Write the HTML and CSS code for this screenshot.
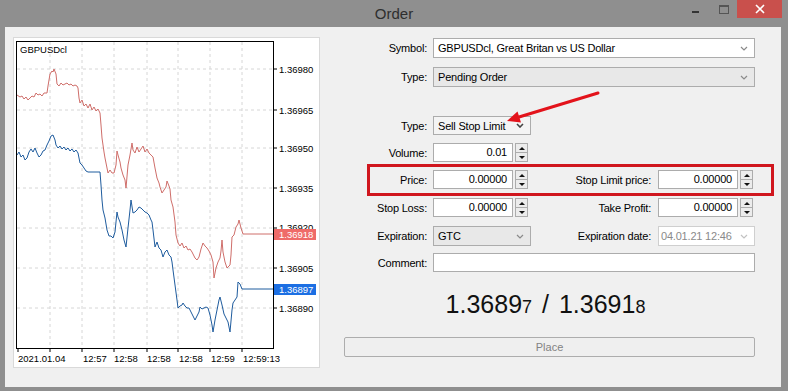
FILE: index.html
```html
<!DOCTYPE html>
<html lang="en">

<head>
    <meta charset="UTF-8">
    <meta name="viewport" content="width=device-width, initial-scale=1.0">
    <title>Order</title>
    <link rel="stylesheet" href="styles.css">
</head>

<body>
    <div class="titlebar">
        <span></span>
        <span class="title">Order</span>
        <div class="controls">
            <span class="ctl"><span class="min-bar"></span></span>
            <span class="ctl"><span class="max-box"></span></span>
            <span class="ctl close">
                <svg width="10" height="10" viewBox="0 0 10 10"><path d="M1 1 L9 9 M9 1 L1 9" stroke="#fff" stroke-width="1.6"/></svg>
            </span>
        </div>
    </div>

    <div class="window-body">
        <!-- chart: svg uses page coordinates through its viewBox -->
        <div class="chart-panel">
            <svg class="chart" width="305" height="329" viewBox="14 38 305 329">
                <defs>
                    <clipPath id="aboveTag"><rect x="274" y="220" width="44" height="9"/></clipPath>
                </defs>
                <g class="grid">
                    <line x1="50" y1="42" x2="50" y2="348"/>
                    <line x1="82" y1="42" x2="82" y2="348"/>
                    <line x1="114" y1="42" x2="114" y2="348"/>
                    <line x1="147" y1="42" x2="147" y2="348"/>
                    <line x1="178" y1="42" x2="178" y2="348"/>
                    <line x1="210" y1="42" x2="210" y2="348"/>
                    <line x1="242" y1="42" x2="242" y2="348"/>
                    <line x1="17" y1="69" x2="273" y2="69"/>
                    <line x1="17" y1="110" x2="273" y2="110"/>
                    <line x1="17" y1="148" x2="273" y2="148"/>
                    <line x1="17" y1="188" x2="273" y2="188"/>
                    <line x1="17" y1="228" x2="273" y2="228"/>
                    <line x1="17" y1="268" x2="273" y2="268"/>
                    <line x1="17" y1="308" x2="273" y2="308"/>
                </g>
                <polyline class="ask" points="17,95 20,97 22,96 24,99 26,97 28,100 30,98 32,96 34,97 36,93 38,95 40,94 42,96 44,93 47,93 48,86 50,74 52,71 53,72 54,69 56,74 57,84 59,86 61,83 63,85 65,84 67,83 69,85 71,84 73,86 75,85 77,86 78,88 79,98 80,103 82,100 84,106 86,104 88,108 90,104 92,110 94,107 96,111 98,109 100,113 101,125 102,138 104,152 105,158 107,168 108,173 110,170 112,173 114,173 116,165 117,151 118,155 120,162 121,168 123,175 125,180 126,188 128,165 130,155 132,143 133,150 135,153 137,147 139,152 141,149 143,146 145,152 147,149 149,153 151,155 153,157 155,168 157,178 159,183 160,187 162,193 164,190 166,187 167,181 169,186 170,189 171,200 173,207 175,222 176,235 178,243 180,246 182,243 184,248 186,246 188,250 190,249 192,252 193,254 195,258 197,260 199,257 200,253 201,249 203,243 205,246 207,248 209,251 211,255 213,262 214,278 216,268 218,262 220,258 221,251 222,240 223,252 225,262 227,268 229,266 230,265 231,255 232,237 234,235 236,227 238,224 239,220 241,228 243,234 273,234"/>
                <polyline class="bid" points="17,155 19,152 21,157 23,155 25,160 27,158 29,152 31,149 33,152 35,148 37,153 39,157 41,155 43,151 45,150 47,145 49,141 51,136 53,135 55,140 56,145 58,148 60,146 62,149 64,147 66,150 68,148 70,151 72,149 74,152 76,150 78,153 80,163 82,165 84,168 86,171 88,172 100,172 101,185 102,200 103,210 105,218 107,230 109,236 111,236 113,238 115,232 117,212 118,217 120,222 122,230 124,240 126,247 128,228 130,210 131,200 133,213 135,212 137,210 139,207 141,208 143,210 145,212 147,213 149,215 151,220 152,222 153,230 155,247 157,242 159,248 161,250 163,257 165,252 167,250 169,255 171,257 172,262 173,270 175,285 177,300 178,308 180,306 182,305 183,303 185,306 187,308 189,308 191,312 193,316 195,320 197,316 199,312 200,307 202,309 204,308 206,307 208,308 210,315 212,325 213,332 215,320 217,310 219,300 220,297 222,305 224,314 226,318 228,322 230,332 232,310 233,303 235,300 237,297 238,282 240,284 242,289 273,289"/>
                <rect class="frame" x="16.5" y="41.5" width="257" height="307"/>
                <g class="ticks">
                    <line x1="273" y1="69" x2="277" y2="69"/>
                    <line x1="273" y1="110" x2="277" y2="110"/>
                    <line x1="273" y1="148" x2="277" y2="148"/>
                    <line x1="273" y1="188" x2="277" y2="188"/>
                    <line x1="273" y1="228" x2="277" y2="228"/>
                    <line x1="273" y1="268" x2="277" y2="268"/>
                    <line x1="273" y1="308" x2="277" y2="308"/>
                    <line x1="18" y1="348" x2="18" y2="352"/>
                    <line x1="50" y1="348" x2="50" y2="352"/>
                    <line x1="82" y1="348" x2="82" y2="352"/>
                    <line x1="114" y1="348" x2="114" y2="352"/>
                    <line x1="147" y1="348" x2="147" y2="352"/>
                    <line x1="178" y1="348" x2="178" y2="352"/>
                    <line x1="210" y1="348" x2="210" y2="352"/>
                    <line x1="242" y1="348" x2="242" y2="352"/>
                </g>
                <g class="labels">
                    <text x="20" y="53">GBPUSDcl</text>
                    <text x="279" y="73">1.36980</text>
                    <text x="279" y="114">1.36965</text>
                    <text x="279" y="152">1.36950</text>
                    <text x="279" y="192">1.36935</text>
                    <text x="279" y="231" clip-path="url(#aboveTag)">1.36920</text>
                    <text x="279" y="272">1.36905</text>
                    <text x="279" y="312">1.36890</text>
                    <text x="18" y="362">2021.01.04</text>
                    <text x="83" y="362">12:57</text>
                    <text x="114" y="362">12:58</text>
                    <text x="147" y="362">12:58</text>
                    <text x="179" y="362">12:58</text>
                    <text x="211" y="362">12:59</text>
                    <text x="243" y="362">12:59:13</text>
                </g>
                <rect class="ask-tag" x="274" y="229" width="42" height="11"/>
                <text class="tag-text" x="279" y="238">1.36918</text>
                <rect class="bid-tag" x="274" y="284" width="42" height="11"/>
                <text class="tag-text" x="279" y="293">1.36897</text>
            </svg>
        </div>

        <div class="form">
            <div class="row tall">
                <label class="lbl">Symbol:</label>
                <div class="select span-all">
                    <span>GBPUSDcl, Great Britan vs US Dollar</span>
                    <svg class="chev" viewBox="0 0 8 5"><polyline points="1,1 4,4 7,1"/></svg>
                </div>
            </div>

            <div class="row tall gap-9">
                <label class="lbl">Type:</label>
                <div class="select span-all shaded">
                    <span>Pending Order</span>
                    <svg class="chev" viewBox="0 0 8 5"><polyline points="1,1 4,4 7,1"/></svg>
                </div>
            </div>

            <div class="row gap-29">
                <label class="lbl">Type:</label>
                <div class="select short light">
                    <span>Sell Stop Limit</span>
                    <svg class="chev dark" viewBox="0 0 8 5"><polyline points="1,1 4,4 7,1"/></svg>
                </div>
            </div>

            <div class="row gap-8">
                <label class="lbl">Volume:</label>
                <div class="num">0.01</div>
                <span class="spin"><i class="up"></i><i class="down"></i></span>
            </div>

            <div class="row gap-8 marked">
                <label class="lbl">Price:</label>
                <div class="num">0.00000</div>
                <span class="spin"><i class="up"></i><i class="down"></i></span>
                <label class="lbl">Stop Limit price:</label>
                <div class="num">0.00000</div>
                <span class="spin"><i class="up"></i><i class="down"></i></span>
                <div class="highlight"></div>
            </div>

            <div class="row gap-9">
                <label class="lbl">Stop Loss:</label>
                <div class="num">0.00000</div>
                <span class="spin"><i class="up"></i><i class="down"></i></span>
                <label class="lbl">Take Profit:</label>
                <div class="num">0.00000</div>
                <span class="spin"><i class="up"></i><i class="down"></i></span>
            </div>

            <div class="row tall gap-9">
                <label class="lbl">Expiration:</label>
                <div class="select short shaded">
                    <span>GTC</span>
                    <svg class="chev" viewBox="0 0 8 5"><polyline points="1,1 4,4 7,1"/></svg>
                </div>
                <label class="lbl">Expiration date:</label>
                <div class="select date disabled">
                    <span>04.01.21 12:46</span>
                    <svg class="chev" viewBox="0 0 8 5"><polyline points="1,1 4,4 7,1"/></svg>
                </div>
            </div>

            <div class="row gap-7">
                <label class="lbl">Comment:</label>
                <div class="text-input span-all"></div>
            </div>

            <div class="quote">1.3689<small>7</small> / 1.3691<small>8</small></div>

            <button class="place" disabled>Place</button>
        </div>

        <!-- annotation arrow drawn over the form -->
        <svg class="arrow" width="110" height="40" viewBox="500 87 110 40">
            <line x1="598" y1="93" x2="519" y2="117" stroke="#e3131b" stroke-width="3" stroke-linecap="round"/>
            <polygon points="507,121 521,122.5 517.5,111.5" fill="#e3131b"/>
        </svg>
    </div>
</body>

</html>
```

FILE: styles.css
```css
body {
    margin: 0;
    width: 788px;
    height: 391px;
    overflow: hidden;
    background-color: #8f8f8f;
    font-family: "Liberation Sans", Arial, sans-serif;
}

/* title bar */
.titlebar {
    height: 27px;
    display: grid;
    grid-template-columns: 1fr auto 1fr;
}

.title {
    font-size: 15px;
    line-height: 27px;
    color: #2e2e2e;
}

.controls {
    justify-self: end;
    display: flex;
    align-items: flex-start;
    margin-right: 6px;
}

.ctl {
    width: 28px;
    height: 18px;
    display: flex;
    align-items: center;
    justify-content: center;
}

.min-bar {
    width: 7px;
    height: 2px;
    margin-top: 5px;
    background-color: #333;
}

.max-box {
    width: 8px;
    height: 6px;
    border: 1px solid #555;
    border-top-width: 2px;
    margin-left: 1px;
}

.close {
    width: 45px;
    background-color: #c9504c;
}

/* window body */
.window-body {
    position: relative;
    display: flex;
    align-items: flex-start;
    margin-left: 5px;
    width: 776px;
    height: 360px;
    background-color: #f0f0f0;
}

.chart-panel {
    margin: 10px 0 0 8px;
    width: 307px;
    height: 331px;
    box-sizing: border-box;
    border: 1px solid #d9d9d9;
    background-color: #fff;
}

.chart {
    display: block;
}

.grid line {
    stroke: #d6d6d6;
    stroke-width: 1;
    stroke-dasharray: 3 3;
}

.ask {
    fill: none;
    stroke: #cf6e6a;
    stroke-width: 1;
}

.bid {
    fill: none;
    stroke: #1f5c9e;
    stroke-width: 1;
}

.frame {
    fill: none;
    stroke: #000;
    stroke-width: 1;
}

.ticks line {
    stroke: #000;
    stroke-width: 1;
}

.labels text,
.tag-text {
    font-family: "Liberation Sans", Arial, sans-serif;
    font-size: 9.5px;
    fill: #000;
}

.ask-tag {
    fill: #ef6b69;
}

.bid-tag {
    fill: #1c6fe3;
}

.tag-text {
    fill: #fff;
}

/* order form */
.form {
    margin-left: 24px;
    padding-top: 11px;
    width: 411px;
    font-size: 11px;
    letter-spacing: -0.2px;
    color: #000;
}

.row {
    display: grid;
    grid-template-columns: 89px 80px 15px 130px 80px 17px;
    align-items: center;
    height: 19px;
}

.row.tall {
    height: 20px;
}

.gap-7 { margin-top: 7px; }
.gap-8 { margin-top: 8px; }
.gap-9 { margin-top: 9px; }
.gap-29 { margin-top: 29px; }

.lbl {
    text-align: right;
    padding-right: 6px;
}

.row .lbl:nth-of-type(2) {
    padding-right: 7px;
}

.select {
    height: 100%;
    box-sizing: border-box;
    display: flex;
    align-items: center;
    justify-content: space-between;
    padding: 0 6px 0 4px;
    border: 1px solid #acacac;
    background-color: #fff;
}

.span-all {
    grid-column: 2 / 7;
}

.select.shaded {
    background-color: #e8e8e8;
}

.select.light {
    background-color: #f4f4f4;
}

.select.short {
    grid-column: 2 / 4;
    width: 98px;
}

.select.date {
    grid-column: 5 / 7;
    padding-left: 2px;
}

.select.disabled {
    border-color: #cfcfcf;
    color: #8a8a8a;
}

.chev {
    width: 8px;
    height: 5px;
    fill: none;
    stroke: #8a8a8a;
    stroke-width: 1.2;
}

.chev.dark {
    stroke: #444;
    stroke-width: 1.6;
}

.disabled .chev {
    stroke: #c2c2c2;
}

.num {
    height: 100%;
    box-sizing: border-box;
    border: 1px solid #acacac;
    background-color: #fff;
    text-align: right;
    padding-right: 5px;
    line-height: 17px;
}

.spin {
    margin-left: 2px;
    width: 13px;
    height: 19px;
    box-sizing: border-box;
    border: 1px solid #acacac;
    background-color: #ececec;
    display: flex;
    flex-direction: column;
}

.spin i {
    flex: 1;
    display: flex;
    align-items: center;
    justify-content: center;
}

.spin .up {
    border-bottom: 1px solid #acacac;
}

.spin .up::before {
    content: "";
    border-left: 3px solid transparent;
    border-right: 3px solid transparent;
    border-bottom: 3px solid #111;
}

.spin .down::before {
    content: "";
    border-left: 3px solid transparent;
    border-right: 3px solid transparent;
    border-top: 3px solid #111;
}

.marked {
    position: relative;
}

.highlight {
    position: absolute;
    left: 23px;
    top: -6px;
    width: 407px;
    height: 32px;
    box-sizing: border-box;
    border: 3px solid #d0161e;
}

.text-input {
    height: 100%;
    box-sizing: border-box;
    border: 1px solid #acacac;
    background-color: #fff;
}

.quote {
    margin-top: 17px;
    height: 30px;
    line-height: 30px;
    text-align: center;
    font-size: 25px;
    letter-spacing: 0;
    word-spacing: 3px;
    color: #111;
    padding-right: 8px;
}

.quote small {
    font-size: 18px;
}

.place {
    display: block;
    margin-top: 18px;
    width: 411px;
    height: 20px;
    padding: 0;
    border: 1px solid #adadad;
    border-radius: 2px;
    background-color: #efefef;
    color: #838383;
    font-family: "Liberation Sans", Arial, sans-serif;
    font-size: 11px;
}

.arrow {
    position: absolute;
    left: 495px;
    top: 60px;
}
```
